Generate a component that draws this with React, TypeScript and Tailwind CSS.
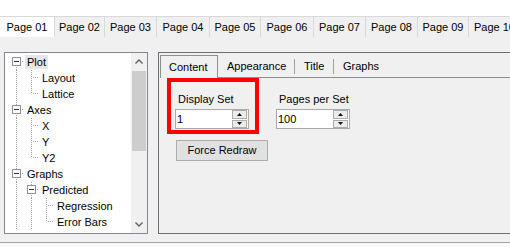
import React from 'react';

type Cell = 'v' | 'tee' | 'ell' | 'boxFirst' | 'box';

interface TreeRow {
  label: string;
  cells: Cell[];
  selected?: boolean;
}

const pageTabs = [
  { label: 'Page 01', w: 'w-[55px]', active: true },
  { label: 'Page 02', w: 'w-[50px]' },
  { label: 'Page 03', w: 'w-[52px]' },
  { label: 'Page 04', w: 'w-[53px]' },
  { label: 'Page 05', w: 'w-[51px]' },
  { label: 'Page 06', w: 'w-[53px]' },
  { label: 'Page 07', w: 'w-[52px]' },
  { label: 'Page 08', w: 'w-[52px]' },
  { label: 'Page 09', w: 'w-[51px]' },
  { label: 'Page 10', w: 'w-[52px]' },
];

const treeRows: TreeRow[] = [
  { label: 'Plot', cells: ['boxFirst'], selected: true },
  { label: 'Layout', cells: ['v', 'tee'] },
  { label: 'Lattice', cells: ['v', 'ell'] },
  { label: 'Axes', cells: ['box'] },
  { label: 'X', cells: ['v', 'tee'] },
  { label: 'Y', cells: ['v', 'tee'] },
  { label: 'Y2', cells: ['v', 'ell'] },
  { label: 'Graphs', cells: ['box'] },
  { label: 'Predicted', cells: ['v', 'box'] },
  { label: 'Regression', cells: ['v', 'v', 'tee'] },
  { label: 'Error Bars', cells: ['v', 'v', 'ell'] },
];

const DOT = '#a0a0a0';

const TreeCell: React.FC<{ kind: Cell }> = ({ kind }) => (
  <svg width="15" height="16" viewBox="0 0 15 16" shapeRendering="crispEdges" className="shrink-0">
    {(kind === 'v' || kind === 'tee') && (
      <line x1="7.5" y1="0" x2="7.5" y2="16" stroke={DOT} strokeDasharray="1 1" />
    )}
    {kind === 'ell' && <line x1="7.5" y1="0" x2="7.5" y2="8" stroke={DOT} strokeDasharray="1 1" />}
    {(kind === 'tee' || kind === 'ell') && (
      <line x1="9" y1="7.5" x2="15" y2="7.5" stroke={DOT} strokeDasharray="1 1" />
    )}
    {(kind === 'box' || kind === 'boxFirst') && (
      <>
        {kind === 'box' && <line x1="7.5" y1="0" x2="7.5" y2="3" stroke={DOT} strokeDasharray="1 1" />}
        <line x1="7.5" y1="13" x2="7.5" y2="16" stroke={DOT} strokeDasharray="1 1" />
        <line x1="13" y1="7.5" x2="15" y2="7.5" stroke={DOT} strokeDasharray="1 1" />
        <rect x="3.5" y="3.5" width="8" height="8" fill="#fff" stroke="#919191" />
        <line x1="5" y1="7.5" x2="10" y2="7.5" stroke="#333" />
      </>
    )}
  </svg>
);

const Chevron: React.FC<{ down?: boolean }> = ({ down }) => (
  <svg width="8" height="5" viewBox="0 0 8 5">
    <polyline
      points={down ? '0.5,0.5 4,4 7.5,0.5' : '0.5,4.5 4,1 7.5,4.5'}
      fill="none"
      stroke="#606060"
      strokeWidth="1.4"
    />
  </svg>
);

const SpinInput: React.FC<{ value: string; width: string }> = ({ value, width }) => (
  <div className={`flex h-[20px] ${width} items-center border border-[#a9a9a9] bg-white`}>
    <span className="flex-1 pl-[1px] leading-[18px]">{value}</span>
    <div className="mr-[1px] flex h-[18px] w-[15px] flex-col gap-[1px] py-[0px]">
      <div className="flex flex-1 items-center justify-center border border-[#acacac] bg-[#ececec]">
        <svg width="5" height="3" viewBox="0 0 5 3">
          <polygon points="2.5,0 5,3 0,3" fill="#111" />
        </svg>
      </div>
      <div className="flex flex-1 items-center justify-center border border-[#acacac] bg-[#ececec]">
        <svg width="5" height="3" viewBox="0 0 5 3">
          <polygon points="0,0 5,0 2.5,3" fill="#111" />
        </svg>
      </div>
    </div>
  </div>
);

export default function App() {
  return (
    <div className="h-[247px] w-[510px] overflow-hidden bg-white font-['Liberation_Sans',Arial,sans-serif] text-[11px] text-black">
      <div className="h-[16px] bg-white" />

      {/* page tabs */}
      <div className="flex h-[21px] border-t border-[#d9d9d9] bg-[#f0f0f0]">
        {pageTabs.map((t) => (
          <div
            key={t.label}
            className={`${t.w} flex shrink-0 items-center justify-center whitespace-nowrap border-r border-[#d9d9d9] ${
              t.active ? 'bg-white' : 'bg-[#f0f0f0]'
            }`}
          >
            {t.label}
          </div>
        ))}
      </div>

      {/* body */}
      <div className="flex h-[205px] gap-[10px] bg-[#f0f0f0] pl-[4px] pt-[15px]">
        {/* tree */}
        <div className="flex h-[182px] w-[144px] shrink-0 border border-[#828790] bg-white">
          <div className="flex-1 pt-[1px]">
            {treeRows.map((r) => (
              <div key={r.label} className="flex h-[16px] items-center pl-[4px]">
                {r.cells.map((c, i) => (
                  <TreeCell key={i} kind={c} />
                ))}
                <span
                  className={`ml-[1px] whitespace-nowrap px-[2px] leading-[14px] ${
                    r.selected ? 'bg-[#e6e6e6]' : ''
                  }`}
                >
                  {r.label}
                </span>
              </div>
            ))}
          </div>
          <div className="flex w-[16px] flex-col bg-[#f0f0f0]">
            <div className="flex h-[17px] items-center justify-center">
              <Chevron />
            </div>
            <div className="mx-[1px] mt-[1px] h-[80px] bg-[#cdcdcd]" />
            <div className="flex-1" />
            <div className="flex h-[17px] items-center justify-center">
              <Chevron down />
            </div>
          </div>
        </div>

        {/* settings panel */}
        <div className="flex h-[182px] min-w-0 flex-1 flex-col border-b border-l border-t border-[#6f6f6f]">
          <div className="flex h-[25px] items-end pl-[1px]">
            <div className="flex h-[23px] w-[58px] shrink-0 items-center border-l border-r border-t border-[#8e8e8e] pl-[8px]">
              Content
            </div>
            <div className="flex h-[23px] w-[77px] shrink-0 items-center justify-between border-b border-[#8e8e8e] pl-[9px]">
              <span>Appearance</span>
              <span className="h-[15px] w-px bg-[#a0a0a0]" />
            </div>
            <div className="flex h-[23px] w-[39px] shrink-0 items-center justify-between border-b border-[#8e8e8e] pl-[9px]">
              <span>Title</span>
              <span className="h-[15px] w-px bg-[#a0a0a0]" />
            </div>
            <div className="flex h-[23px] w-[57px] shrink-0 items-center border-b border-[#8e8e8e] pl-[9px]">
              Graphs
            </div>
            <div className="h-[23px] flex-1 border-b border-[#8e8e8e]" />
          </div>

          <div className="flex flex-col pl-[8px]">
            <div className="flex items-start">
              <div className="flex h-[56px] w-[92px] shrink-0 flex-col border-4 border-[#ff0000] pt-[11px]">
                <span className="pl-[7px] leading-[13px]">Display Set</span>
                <div className="mt-[3px] pl-[4px]">
                  <SpinInput value="1" width="w-[74px]" />
                </div>
              </div>
              <div className="ml-[17px] flex flex-col pt-[15px]">
                <span className="pl-[3px] leading-[13px]">Pages per Set</span>
                <div className="mt-[3px]">
                  <SpinInput value="100" width="w-[74px]" />
                </div>
              </div>
            </div>
            <button className="ml-[9px] mt-[6px] flex h-[21px] w-[92px] items-center justify-center border border-[#adadad] bg-[#e1e1e1]">
              Force Redraw
            </button>
          </div>
        </div>
      </div>

      {/* bottom bar */}
      <div className="h-[5px] border-t border-[#a0a0a0] bg-[#fafafa]" />
    </div>
  );
}
